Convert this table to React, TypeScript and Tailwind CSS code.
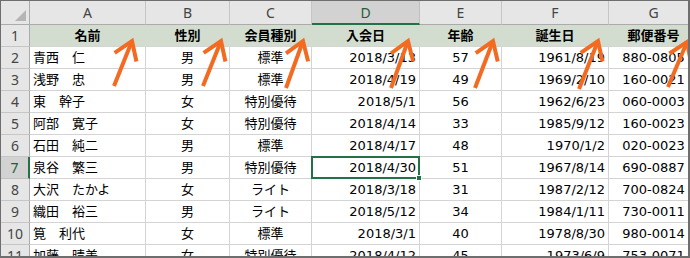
import React from 'react';

const COLUMNS = ['A', 'B', 'C', 'D', 'E', 'F', 'G'];
const TITLES = ['名前', '性別', '会員種別', '入会日', '年齢', '誕生日', '郵便番号'];

// alignment for each data column, as in the sheet
const ALIGN = [
  'justify-start pl-[3px]',
  'justify-center',
  'justify-center',
  'justify-end pr-[3px]',
  'justify-center',
  'justify-end pr-[3px]',
  'justify-center',
];

const ROWS: string[][] = [
  ['青西　仁', '男', '標準', '2018/3/13', '57', '1961/8/19', '880-0805'],
  ['浅野　忠', '男', '標準', '2018/4/19', '49', '1969/2/10', '160-0021'],
  ['東　幹子', '女', '特別優待', '2018/5/1', '56', '1962/6/23', '060-0003'],
  ['阿部　寛子', '女', '特別優待', '2018/4/14', '33', '1985/9/12', '160-0023'],
  ['石田　純二', '男', '標準', '2018/4/17', '48', '1970/1/2', '020-0023'],
  ['泉谷　繁三', '男', '特別優待', '2018/4/30', '51', '1967/8/14', '690-0887'],
  ['大沢　たかよ', '女', 'ライト', '2018/3/18', '31', '1987/2/12', '700-0824'],
  ['織田　裕三', '男', 'ライト', '2018/5/12', '34', '1984/1/11', '730-0011'],
  ['筧　利代', '女', '標準', '2018/3/1', '40', '1978/8/30', '980-0014'],
  ['加藤　晴美', '女', '特別優待', '2018/4/12', '45', '1973/6/9', '753-0071'],
];

// tip and tail of each orange arrow
const ARROWS = [
  { tip: [131, 40], tail: [113, 85] },
  { tip: [220, 40], tail: [202, 85] },
  { tip: [302, 40], tail: [285, 87] },
  { tip: [407, 40], tail: [390, 87] },
  { tip: [492, 40], tail: [474, 87] },
  { tip: [597, 40], tail: [578, 88] },
  { tip: [686, 41], tail: [667, 86] },
];

function Arrow({ tip, tail }: { tip: number[]; tail: number[] }) {
  const dx = tail[0] - tip[0];
  const dy = tail[1] - tip[1];
  const a = Math.atan2(dy, dx);
  const len = 21;
  const spread = (34 * Math.PI) / 180;
  const w1 = [tip[0] + len * Math.cos(a + spread), tip[1] + len * Math.sin(a + spread)];
  const w2 = [tip[0] + len * Math.cos(a - spread), tip[1] + len * Math.sin(a - spread)];
  return (
    <g stroke="#f26b21" strokeWidth={4} fill="none" strokeLinecap="butt" strokeLinejoin="miter">
      <line x1={tail[0]} y1={tail[1]} x2={tip[0]} y2={tip[1]} />
      <polyline points={`${w1[0]},${w1[1]} ${tip[0]},${tip[1]} ${w2[0]},${w2[1]}`} />
    </g>
  );
}

export default function App() {
  return (
    <div className="relative w-[690px] h-[258px] overflow-hidden bg-white border-t border-l border-r-2 border-b-2 border-[#6e6e6e] font-[family-name:'DejaVu_Sans','Noto_Sans_CJK_JP',sans-serif] text-[13px] text-black">
      <div className="grid grid-cols-[29px_116px_84px_82px_108px_82px_107px_90px] grid-rows-[24px_repeat(11,22px)]">
        {/* corner */}
        <div className="bg-[#e6e6e6] border-r border-b border-[#ababab] flex items-end justify-end pr-[3px] pb-[3px]">
          <svg width="11" height="11" viewBox="0 0 11 11">
            <polygon points="11,0 11,11 0,11" fill="#b5b5b5" />
          </svg>
        </div>
        {COLUMNS.map((c) => (
          <div
            key={c}
            className={
              c === 'D'
                ? 'bg-[#d2d2d2] border-r border-r-[#c0c0c0] border-b-2 border-b-[#217346] flex items-center justify-center text-[#1e5e3a] font-[family-name:"Noto_Sans",sans-serif] text-[14px]'
                : 'bg-[#e6e6e6] border-r border-r-[#c6c6c6] border-b border-b-[#ababab] flex items-center justify-center text-[#444] font-[family-name:"Noto_Sans",sans-serif] text-[14px]'
            }
          >
            {c}
          </div>
        ))}

        {/* row 1: titles */}
        <div className="bg-[#e6e6e6] border-r border-r-[#ababab] border-b border-b-[#c6c6c6] flex items-center justify-center text-[#444] font-[family-name:'Noto_Sans',sans-serif] text-[14px]">
          1
        </div>
        {TITLES.map((t) => (
          <div
            key={t}
            className="bg-[#d2ddcf] border-r border-r-[#d2ddcf] border-b border-b-[#d4d4d4] flex items-center justify-center font-bold whitespace-nowrap overflow-hidden"
          >
            {t}
          </div>
        ))}

        {ROWS.map((row, ri) => {
          const n = ri + 2;
          const active = n === 7;
          return (
            <React.Fragment key={n}>
              <div
                className={
                  active
                    ? 'bg-[#d2d2d2] border-r-2 border-r-[#217346] border-b border-b-[#c0c0c0] flex items-center justify-center text-[#1e5e3a] font-[family-name:"Noto_Sans",sans-serif] text-[14px]'
                    : 'bg-[#e6e6e6] border-r border-r-[#ababab] border-b border-b-[#c6c6c6] flex items-center justify-center text-[#444] font-[family-name:"Noto_Sans",sans-serif] text-[14px]'
                }
              >
                {n}
              </div>
              {row.map((v, ci) => (
                <div
                  key={ci}
                  className={`relative border-r border-b border-[#d4d4d4] flex items-center whitespace-nowrap ${ALIGN[ci]}`}
                >
                  {v}
                  {active && ci === 3 && (
                    <div className="absolute -left-px -top-px -right-px -bottom-px border-2 border-[#217346] z-10">
                      <div className="absolute -right-[4px] -bottom-[4px] w-[6px] h-[6px] bg-[#217346] border border-white" />
                    </div>
                  )}
                </div>
              ))}
            </React.Fragment>
          );
        })}
      </div>

      <svg className="absolute inset-0 z-20 pointer-events-none" width="690" height="258">
        {ARROWS.map((a, i) => (
          <Arrow key={i} tip={a.tip} tail={a.tail} />
        ))}
      </svg>
    </div>
  );
}
